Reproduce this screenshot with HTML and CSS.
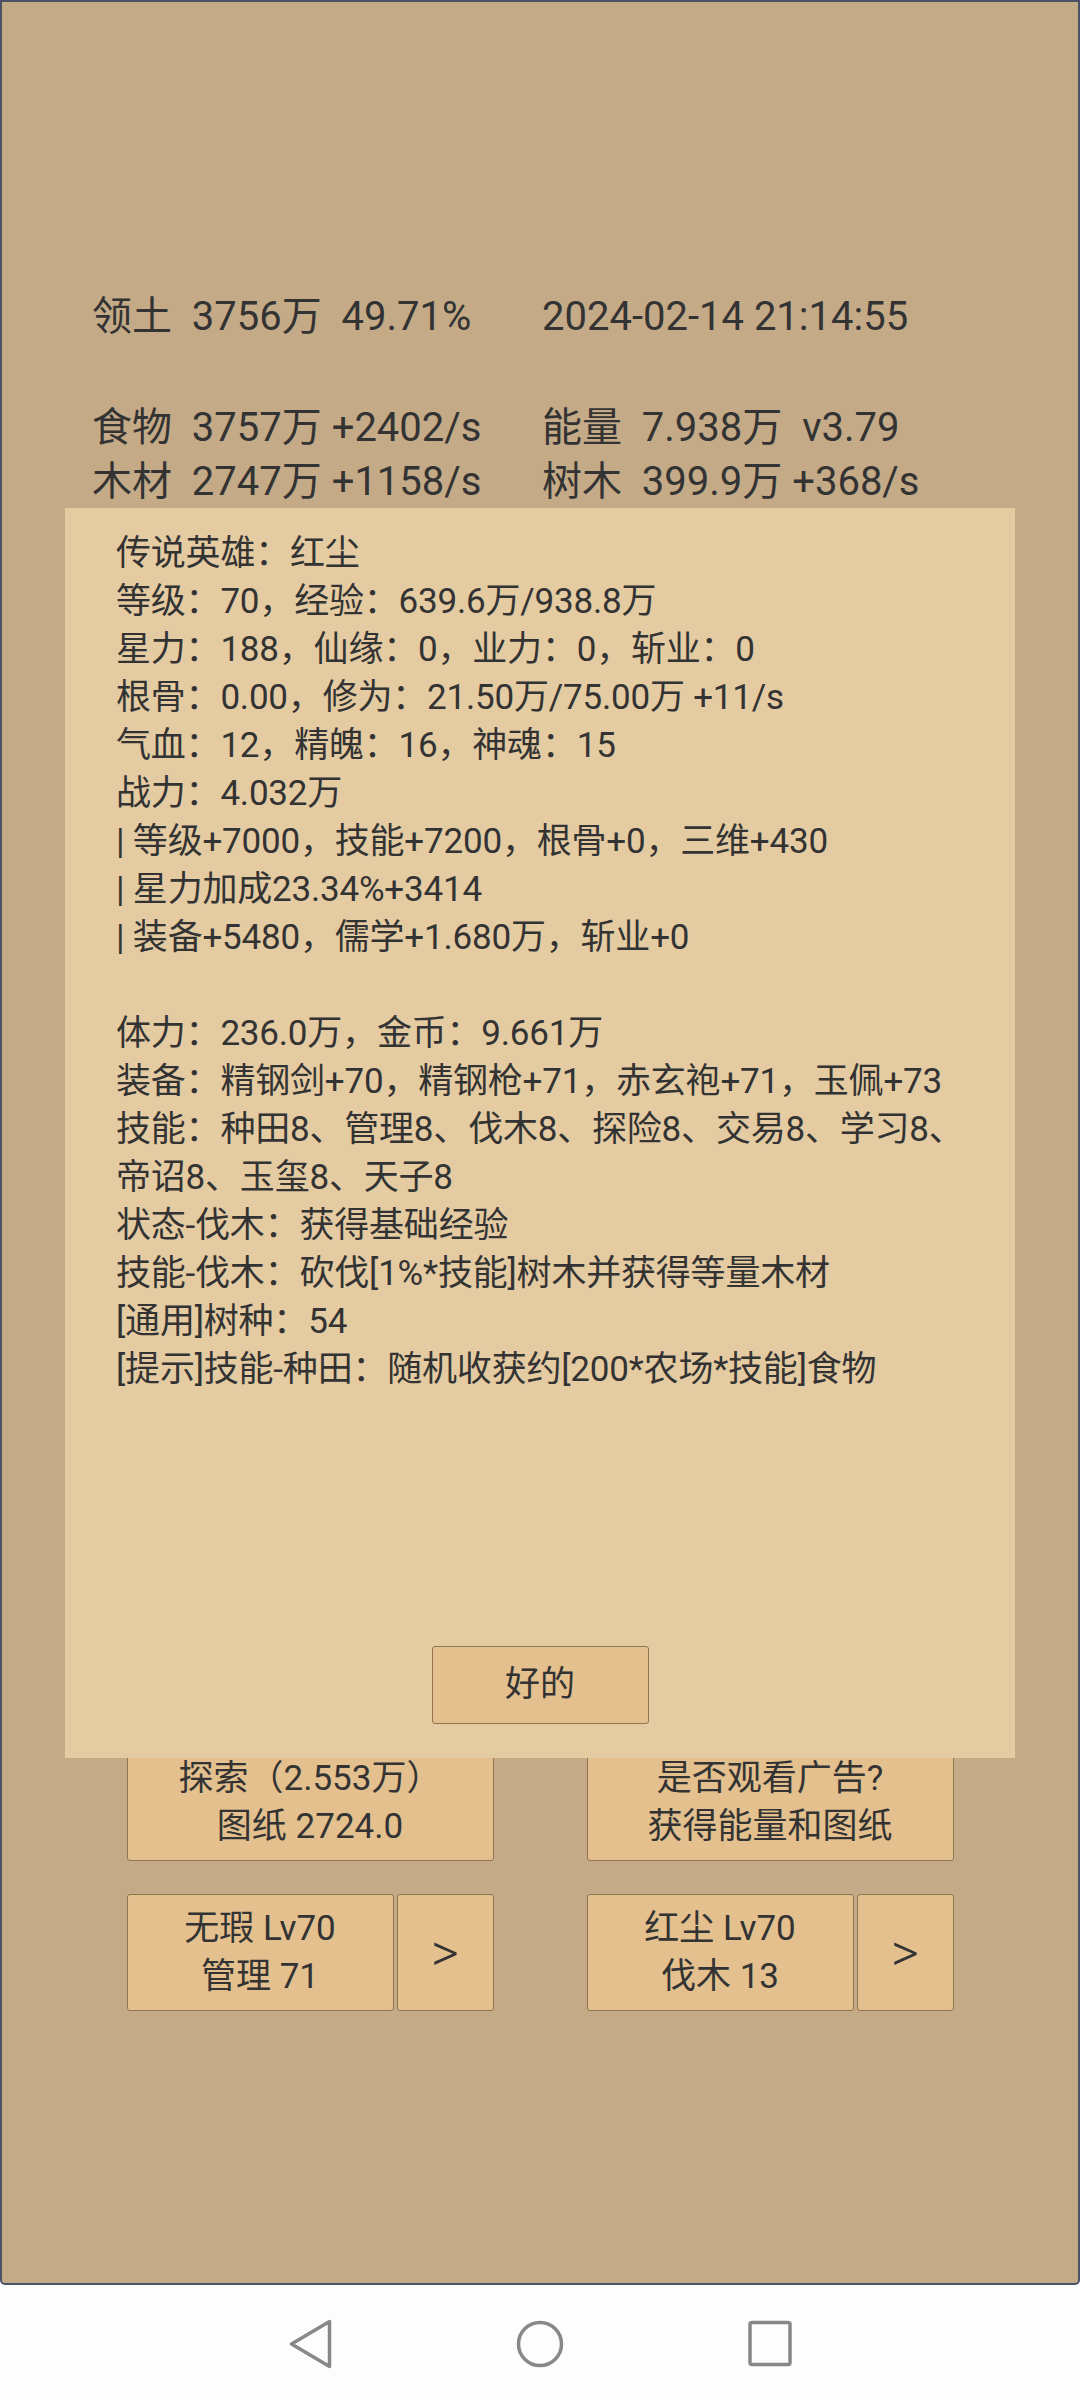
FILE: index.html
```html
<!DOCTYPE html>
<html lang="zh-CN">
<head>
  <meta charset="UTF-8" />
  <meta name="viewport" content="width=device-width, initial-scale=1.0"/>
  <title>领土</title>
  <link rel="stylesheet" href="styles.css">
</head>
<body>

  <div class="screen">
    <div class="stats">
      <div class="stat-row">
        <span>领土  3756万  49.71%</span>
        <span>2024-02-14 21:14:55</span>
      </div>
      <div class="stat-row gap">
        <span>食物  3757万 +2402/s</span>
        <span>能量  7.938万  v3.79</span>
      </div>
      <div class="stat-row">
        <span>木材  2747万 +1158/s</span>
        <span>树木  399.9万 +368/s</span>
      </div>
    </div>

    <div class="actions">
      <button class="btn">探索（2.553万）<br>图纸 2724.0</button>
      <button class="btn">是否观看广告?<br>获得能量和图纸</button>
      <div class="hero-pick">
        <button class="btn">无瑕 Lv70<br>管理 71</button>
        <button class="btn next">&gt;</button>
      </div>
      <div class="hero-pick">
        <button class="btn">红尘 Lv70<br>伐木 13</button>
        <button class="btn next">&gt;</button>
      </div>
    </div>

    <div class="dialog">
      <div class="dialog-text">
        <div class="line">传说英雄：红尘</div>
        <div class="line">等级：70，经验：639.6万/938.8万</div>
        <div class="line">星力：188，仙缘：0，业力：0，斩业：0</div>
        <div class="line">根骨：0.00，修为：21.50万/75.00万 +11/s</div>
        <div class="line">气血：12，精魄：16，神魂：15</div>
        <div class="line">战力：4.032万</div>
        <div class="line">| 等级+7000，技能+7200，根骨+0，三维+430</div>
        <div class="line">| 星力加成23.34%+3414</div>
        <div class="line">| 装备+5480，儒学+1.680万，斩业+0</div>
        <div class="line"></div>
        <div class="line">体力：236.0万，金币：9.661万</div>
        <div class="line">装备：精钢剑+70，精钢枪+71，赤玄袍+71，玉佩+73</div>
        <div class="line">技能：种田8、管理8、伐木8、探险8、交易8、学习8、</div>
        <div class="line">帝诏8、玉玺8、天子8</div>
        <div class="line">状态-伐木：获得基础经验</div>
        <div class="line">技能-伐木：砍伐[1%*技能]树木并获得等量木材</div>
        <div class="line">[通用]树种：54</div>
        <div class="line">[提示]技能-种田：随机收获约[200*农场*技能]食物</div>
      </div>
      <button class="btn ok">好的</button>
    </div>
  </div>

  <div class="navbar">
    <svg class="nav-icon" width="60" height="60" viewBox="0 0 60 60">
      <path d="M49.5 7.5 L49.5 52.5 L11.5 30 Z" fill="none" stroke="#888" stroke-width="3.5" stroke-linejoin="round"/>
    </svg>
    <svg class="nav-icon" width="60" height="60" viewBox="0 0 60 60">
      <circle cx="30" cy="30" r="21.5" fill="none" stroke="#888" stroke-width="3.5"/>
    </svg>
    <svg class="nav-icon" width="60" height="60" viewBox="0 0 60 60">
      <rect x="10" y="8.5" width="40" height="42" rx="2" fill="none" stroke="#888" stroke-width="3.5"/>
    </svg>
  </div>

</body>
</html>
```

FILE: styles.css
```css
body {
  margin: 0;
  padding: 0;
  width: 1080px;
  height: 2400px;
  overflow: hidden;
  font-family: Roboto, "Noto Sans CJK SC", sans-serif;
  color: #333;
  background: #fdfdfd;
}

.screen {
  position: relative;
  height: 2285px;
  box-sizing: border-box;
  border: 2px solid #4b5466;
  border-radius: 0 0 5px 5px;
  background: #c4aa87;
}

.stats {
  padding: 288px 0 0 90px;
  font-size: 40px;
  line-height: 54px;
}

.stat-row {
  display: grid;
  grid-template-columns: 450px 1fr;
  white-space: pre;
}

.stat-row.gap {
  margin-top: 57px;
}

.actions {
  display: grid;
  grid-template-columns: 367px 367px;
  column-gap: 93px;
  row-gap: 33px;
  justify-content: center;
  margin-top: 1235px;
}

.btn {
  font-family: Roboto, "Noto Sans CJK SC", sans-serif;
  font-size: 35px;
  line-height: 48px;
  color: #333;
  background: #e3c08e;
  border: 1px solid #8f7550;
  border-radius: 3px;
  height: 117px;
  padding: 0;
  text-align: center;
}

.hero-pick {
  display: grid;
  grid-template-columns: 267px 97px;
  column-gap: 3px;
}

.btn.next {
  font-size: 54px;
  font-weight: 300;
  line-height: 54px;
}

.dialog {
  position: absolute;
  left: 63px;
  top: 506px;
  width: 950px;
  height: 1250px;
  box-sizing: border-box;
  padding: 22px 0 34px 51px;
  background: #e4cba2;
  display: flex;
  flex-direction: column;
}

.dialog-text {
  font-size: 35px;
  line-height: 48px;
  letter-spacing: -0.2px;
  white-space: nowrap;
}

.line {
  min-height: 48px;
}

.btn.ok {
  margin-top: auto;
  align-self: center;
  margin-left: -51px;
  width: 217px;
  height: 78px;
}

.navbar {
  height: 115px;
  display: flex;
  justify-content: center;
  align-items: center;
  gap: 170px;
}

.nav-icon {
  display: block;
  margin-top: 2px;
}
```
